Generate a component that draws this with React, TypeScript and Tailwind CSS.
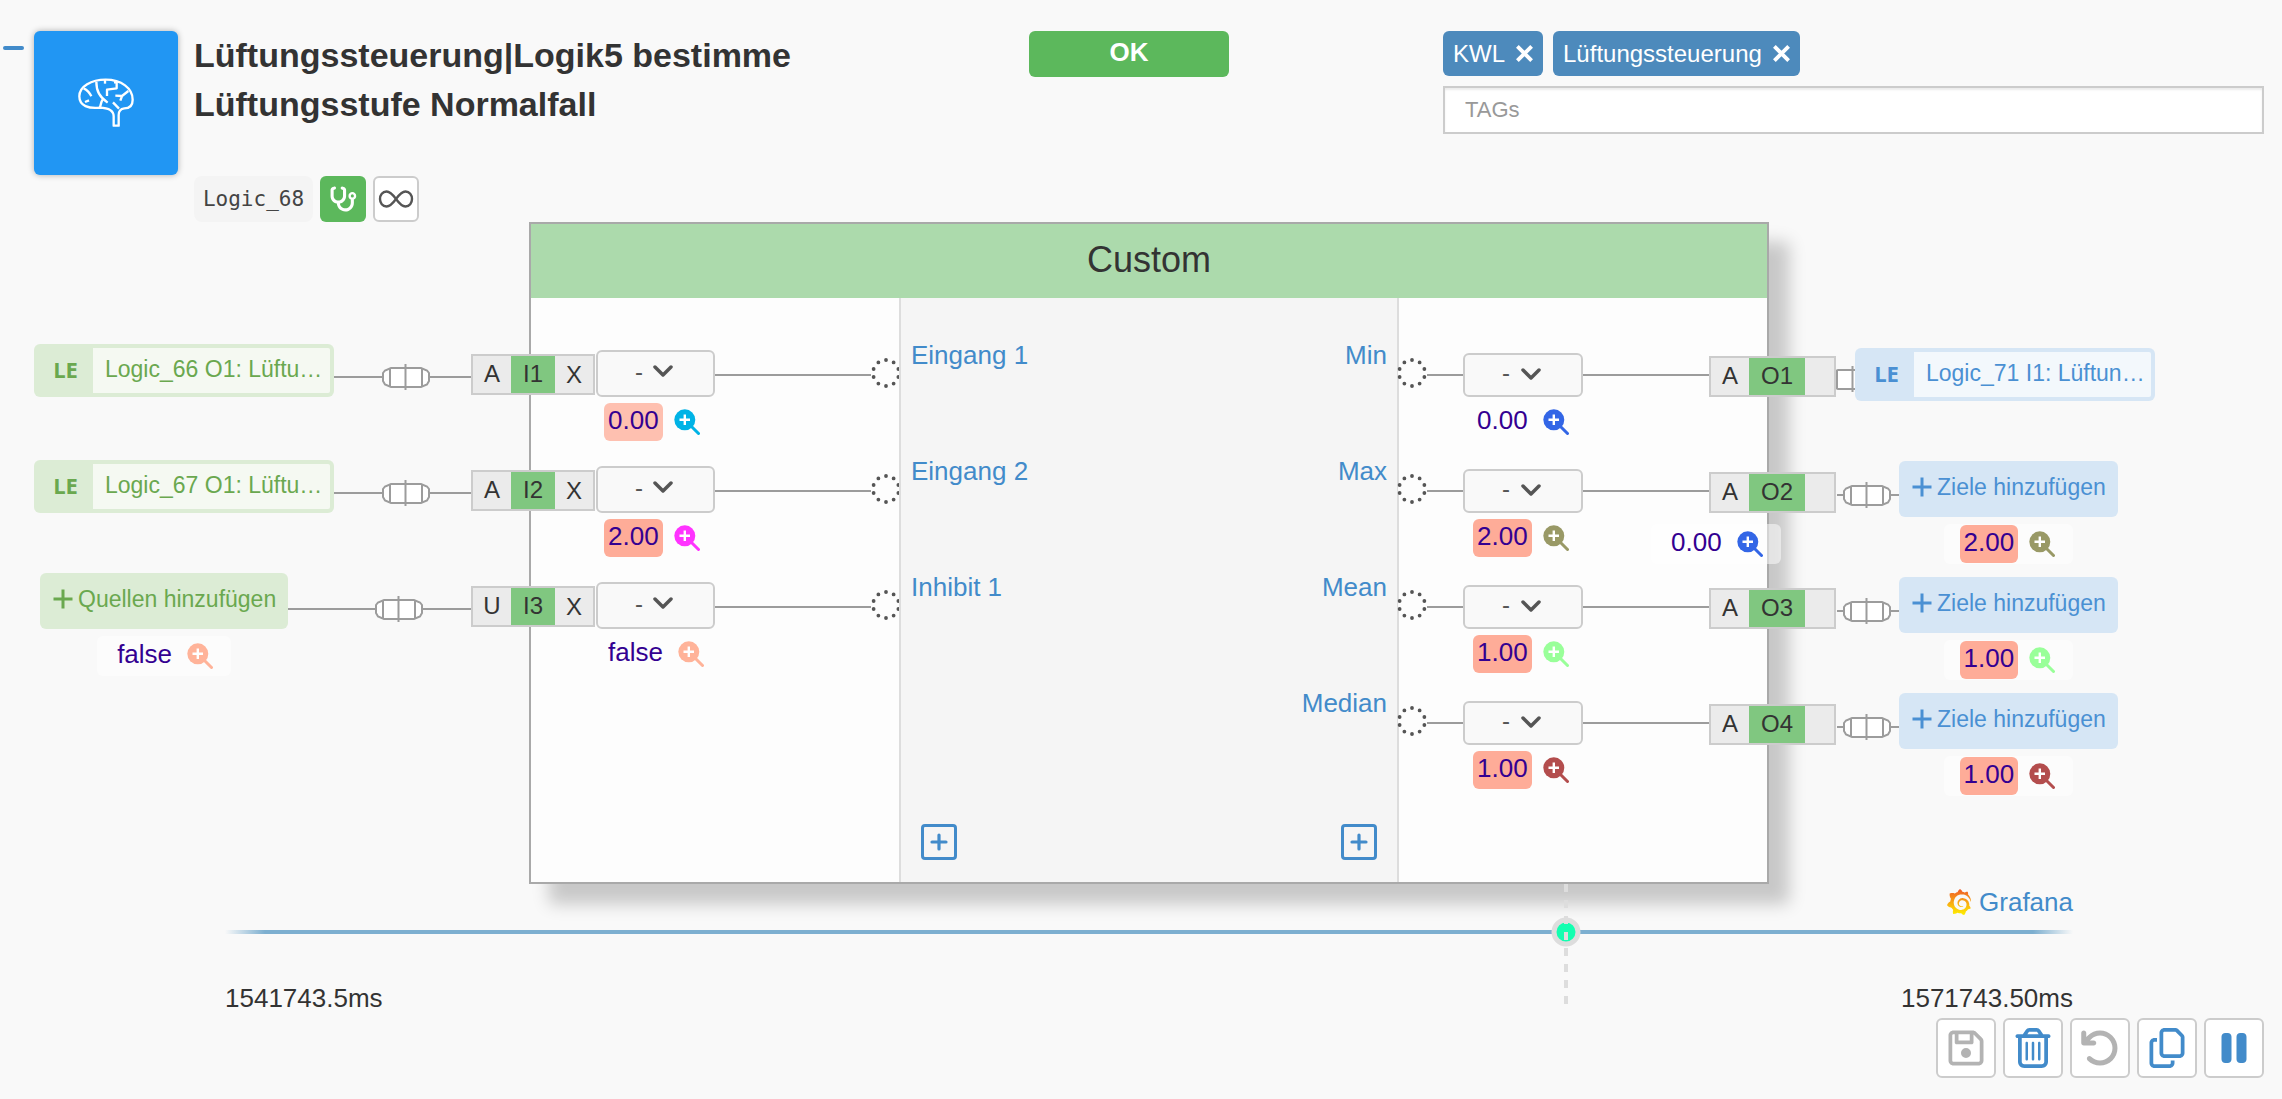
import React from 'react';
import {
  FaArrowRotateLeft,
  FaPause,
  FaRegCopy,
  FaRegFloppyDisk,
  FaRegTrashCan,
  FaStethoscope,
} from 'react-icons/fa6';
import { SiGrafana } from 'react-icons/si';

type Tone = 'green' | 'blue';

interface Reading {
  text: string;
  highlight?: string;
  lens: string;
}

interface Port {
  kind: string;
  name: string;
  label: string;
  value: Reading;
  link?: string;
  outer?: Reading;
}

const SALMON = 'bg-[#feac98]';

const inputs: Port[] = [
  {
    kind: 'A',
    name: 'I1',
    label: 'Eingang 1',
    value: { text: '0.00', highlight: 'bg-[#fec0b0]', lens: 'text-[#00b3e6]' },
    link: 'Logic_66 O1: Lüftu…',
  },
  {
    kind: 'A',
    name: 'I2',
    label: 'Eingang 2',
    value: { text: '2.00', highlight: SALMON, lens: 'text-[#ff33ff]' },
    link: 'Logic_67 O1: Lüftu…',
  },
  {
    kind: 'U',
    name: 'I3',
    label: 'Inhibit 1',
    value: { text: 'false', lens: 'text-[#ffb399]' },
    outer: { text: 'false', lens: 'text-[#ffb399]' },
  },
];

const outputs: Port[] = [
  {
    kind: 'A',
    name: 'O1',
    label: 'Min',
    value: { text: '0.00', lens: 'text-[#3366e6]' },
    link: 'Logic_71 I1: Lüftun…',
    outer: { text: '0.00', lens: 'text-[#3366e6]' },
  },
  {
    kind: 'A',
    name: 'O2',
    label: 'Max',
    value: { text: '2.00', highlight: SALMON, lens: 'text-[#999966]' },
    outer: { text: '2.00', highlight: SALMON, lens: 'text-[#999966]' },
  },
  {
    kind: 'A',
    name: 'O3',
    label: 'Mean',
    value: { text: '1.00', highlight: SALMON, lens: 'text-[#99ff99]' },
    outer: { text: '1.00', highlight: SALMON, lens: 'text-[#99ff99]' },
  },
  {
    kind: 'A',
    name: 'O4',
    label: 'Median',
    value: { text: '1.00', highlight: SALMON, lens: 'text-[#b34d4d]' },
    outer: { text: '1.00', highlight: SALMON, lens: 'text-[#b34d4d]' },
  },
];

function BrainIcon() {
  return (
    <svg
      className="h-[50px] w-14"
      viewBox="235 175 168 150"
      fill="none"
      stroke="white"
      strokeWidth="7"
      strokeLinejoin="round"
      aria-hidden="true"
    >
      <path d="M300 264C268 267 239 260 239 230C239 200 275 180 318 180C365 180 399 206 399 240C399 257 390 266 374 266C361 268 357 276 357 286V318H342V290C342 274 330 265 300 264Z" />
      <path d="M252 206C262 211 270 219 275 230" />
      <path d="M256 247L268 242" />
      <path d="M290 186C290 215 300 232 324 249" />
      <path d="M310 238C304 245 304 254 301 263" />
      <path d="M316 181V192" />
      <path d="M343 188H351V206L322 210V229" />
      <path d="M386 214L367 229L347 228M367 229L362 243" />
      <path d="M340 248L358 267" />
    </svg>
  );
}

function InfinityIcon() {
  return (
    <svg className="h-5 w-9" viewBox="0 0 36 20" fill="none" stroke="#555" strokeWidth="2.4" aria-hidden="true">
      <path d="M18 10C14 4.500 11.500 2.500 8.500 2.500C4.500 2.500 2 6 2 10S4.500 17.500 8.500 17.500C11.500 17.500 14 15.500 18 10C22 4.500 24.500 2.500 27.500 2.500C31.500 2.500 34 6 34 10S31.500 17.500 27.500 17.500C24.500 17.500 22 15.500 18 10Z" />
    </svg>
  );
}

function LensIcon({ tone }: { tone: string }) {
  return (
    <svg className={`size-[26px] ${tone}`} viewBox="0 0 26 26" aria-hidden="true">
      <path d="M16 16L24.500 24.500" stroke="currentColor" strokeWidth="3" strokeLinecap="round" />
      <circle cx="10.800" cy="10.800" r="10.500" fill="currentColor" />
      <path d="M10.800 5.500V16M5.500 10.800H16" stroke="white" strokeWidth="2.400" />
    </svg>
  );
}

function PlusIcon() {
  return (
    <svg className="size-5" viewBox="0 0 20 20" stroke="currentColor" strokeWidth="3" aria-hidden="true">
      <path d="M10 .5V19.500M.5 10H19.500" />
    </svg>
  );
}

function Plug() {
  return (
    <svg
      className="h-[26px] w-12 shrink-0"
      viewBox="0 0 48 26"
      fill="white"
      stroke="#9c9c9c"
      strokeWidth="2"
      aria-hidden="true"
    >
      <path d="M1 9L3 6.500L9 4H39L45 6.500L47 9V17L45 20.500L39 23H9L3 20.500L1 17Z" />
      <path d="M8 4V23M40 4V23M23.500 0V26" />
    </svg>
  );
}

function Wire({ className }: { className: string }) {
  return <span className={`h-0.5 bg-[#9c9c9c] ${className}`} />;
}

function ValueTag({ reading, pill = '' }: { reading: Reading; pill?: string }) {
  return (
    <div className={`flex items-center gap-[11px] text-[26px] leading-[34px] text-[#330091] ${pill}`}>
      <span className={`h-[38px] rounded-md px-1 ${reading.highlight ?? ''}`}>{reading.text}</span>
      <button type="button" aria-label={`Verlauf ${reading.text}`}>
        <LensIcon tone={reading.lens} />
      </button>
    </div>
  );
}

function FilterSelect({ name, size }: { name: string; size: string }) {
  return (
    <div className="relative">
      <select
        aria-label={`Filter ${name}`}
        className={`block appearance-none rounded-md border-2 border-[#ccc] bg-[#f9f9f9] pb-1 pl-[37px] text-2xl text-[#555] ${size}`}
      >
        <option>-</option>
      </select>
      <svg
        className="pointer-events-none absolute top-[15px] right-[42px] h-3 w-5"
        viewBox="0 0 20 12"
        fill="none"
        stroke="#555"
        strokeWidth="3.500"
        strokeLinecap="round"
        strokeLinejoin="round"
        aria-hidden="true"
      >
        <path d="M2 2L10 10L18 2" />
      </svg>
    </div>
  );
}

function Anchor({ className }: { className: string }) {
  return (
    <svg className={`size-[30px] shrink-0 ${className}`} viewBox="0 0 30 30" aria-hidden="true">
      <circle cx="15" cy="15" r="14" fill="#fdfdfd" />
      <circle
        cx="15"
        cy="15"
        r="13"
        fill="none"
        stroke="#555"
        strokeWidth="3.800"
        strokeLinecap="round"
        strokeDasharray="0 10"
        pathLength="100"
        transform="rotate(-90 15 15)"
      />
    </svg>
  );
}

function PortBox({ port, output = false }: { port: Port; output?: boolean }) {
  return (
    <div className="relative z-10 flex h-[41px] shrink-0 border-2 border-[#ccc] bg-[#ebebeb] text-2xl leading-9 text-[#333]">
      <span className="w-[38px] text-center">{port.kind}</span>
      <span className={`bg-[#80c780] text-center ${output ? 'w-14' : 'w-11'}`}>{port.name}</span>
      {output ? (
        <span className="w-[29px]" />
      ) : (
        <button type="button" className="w-[38px]" aria-label={`${port.name} trennen`}>
          X
        </button>
      )}
    </div>
  );
}

function LinkedBlock({ text, tone }: { text: string; tone: Tone }) {
  const green = tone === 'green';
  return (
    <a
      href="#"
      className={`z-10 flex h-[53px] w-[300px] shrink-0 rounded-md p-1 ${
        green ? 'bg-[#dcecd5] text-[#6aa84f]' : 'bg-[#d6e6f5] text-[#4a90d3]'
      }`}
    >
      <span className="w-[55px] text-center font-['Open_Sans',sans-serif] text-[22px] leading-[42px] font-bold">LE</span>
      <span
        className={`flex-1 rounded-r-xs pl-3 text-[23px] leading-[42px] whitespace-nowrap ${
          green ? 'bg-[#f5f9f2]' : 'bg-[#f3f8fc]'
        }`}
      >
        {text}
      </span>
    </a>
  );
}

function AddButton({ text, tone }: { text: string; tone: Tone }) {
  return (
    <button
      type="button"
      className={`flex h-14 items-center gap-[5px] rounded-md pr-3 pb-1 pl-[13px] text-[23px] whitespace-nowrap ${
        tone === 'green' ? 'bg-[#dcecd5] text-[#6aa84f]' : 'bg-[#d6e6f5] text-[#4a90d3]'
      }`}
    >
      <PlusIcon />
      {text}
    </button>
  );
}

const outerPill = 'mt-[7px] h-10 rounded-md bg-white/50 pr-[18px] pl-4 shrink-0';

function SourceRow({ port }: { port: Port }) {
  return (
    <li className="flex h-29 items-start pr-[58px]">
      {port.link ? (
        <div className="mt-[9px] ml-[34px]">
          <LinkedBlock text={port.link} tone="green" />
        </div>
      ) : (
        <div className="mt-1.5 ml-10 flex flex-col items-center">
          <AddButton text="Quellen hinzufügen" tone="green" />
          {port.outer && <ValueTag reading={port.outer} pill={outerPill} />}
        </div>
      )}
      <Wire className="mt-[41px] flex-1" />
      <div className="mt-[29px]">
        <Plug />
      </div>
      <Wire className={`mt-[41px] ${port.link ? 'w-[41px]' : 'w-12'}`} />
    </li>
  );
}

function TargetRow({ port }: { port: Port }) {
  if (port.link) {
    return (
      <li className="relative flex h-29 items-start pl-[60px]">
        <div className="mt-[31px] -mr-[22px]">
          <Plug />
        </div>
        <div className="relative mt-[13px]">
          <LinkedBlock text={port.link} tone="blue" />
        </div>
        {port.outer && (
          <div className="absolute top-[182px] -left-[118px] z-20">
            <ValueTag reading={port.outer} pill={outerPill} />
          </div>
        )}
      </li>
    );
  }
  return (
    <li className="flex h-29 items-start pl-[68px]">
      <Wire className="mt-[43px] w-1.5" />
      <div className="mt-[31px]">
        <Plug />
      </div>
      <Wire className="mt-[43px] w-2" />
      <div className="mt-2.5 flex flex-col items-center">
        <AddButton text="Ziele hinzufügen" tone="blue" />
        {port.outer && <ValueTag reading={port.outer} pill={outerPill} />}
      </div>
    </li>
  );
}

function InputRow({ port }: { port: Port }) {
  return (
    <li className="-mr-0.5 -ml-[60px] flex h-29 items-start">
      <div className="mt-[19px] mr-px">
        <PortBox port={port} />
      </div>
      <div className="mt-[15px]">
        <FilterSelect name={port.name} size="h-[47px] w-[119px]" />
        <div className="mt-1.5 pl-2">
          <ValueTag reading={port.value} />
        </div>
      </div>
      <Wire className="mt-[39px] flex-1" />
      <Anchor className="mt-[23px]" />
    </li>
  );
}

function OutputRow({ port }: { port: Port }) {
  return (
    <li className="-mr-[69px] -ml-0.5 flex h-29 items-start">
      <Anchor className="mt-[23px]" />
      <Wire className="mt-[39px] w-9" />
      <div className="mt-[18px]">
        <FilterSelect name={port.name} size="h-11 w-[120px]" />
        <div className="mt-1.5 pl-2.5">
          <ValueTag reading={port.value} />
        </div>
      </div>
      <Wire className="mt-[39px] flex-1" />
      <div className="mt-[21px]">
        <PortBox port={port} output />
      </div>
    </li>
  );
}

function AddPort({ label }: { label: string }) {
  return (
    <button
      type="button"
      aria-label={label}
      className="flex size-9 items-center justify-center rounded-sm border-3 border-[#428bca] text-[#428bca]"
    >
      <svg className="size-[18px]" viewBox="0 0 18 18" stroke="currentColor" strokeWidth="3.200" strokeLinecap="round">
        <path d="M9 2V16M2 9H16" />
      </svg>
    </button>
  );
}

function Tag({ text }: { text: string }) {
  return (
    <span className="flex h-[45px] items-center gap-[11px] rounded-md bg-[#4d8abc] px-2.5 text-2xl text-white">
      {text}
      <button type="button" aria-label={`${text} entfernen`}>
        <svg className="size-[17px]" viewBox="0 0 16 16" stroke="currentColor" strokeWidth="3.600">
          <path d="M1.300 1.300L14.700 14.700M14.700 1.300L1.300 14.700" />
        </svg>
      </button>
    </span>
  );
}

function ToolButton({ label, disabled = false, children }: { label: string; disabled?: boolean; children: React.ReactNode }) {
  return (
    <button
      type="button"
      aria-label={label}
      disabled={disabled}
      className={`flex size-15 items-center justify-center rounded-md border-2 border-[#ccc] bg-white text-[40px] ${
        disabled ? 'text-[#b3b3b3]' : 'text-[#428bca]'
      }`}
    >
      {children}
    </button>
  );
}

function Header() {
  return (
    <header className="grid min-h-[222px] grid-cols-[1029fr_414fr_839fr] pt-[31px]">
      <div className="flex items-start">
        <button type="button" aria-label="Einklappen" className="mt-[15px] mr-2.5 ml-[3px] h-1 w-[21px] rounded-full bg-[#428bca]" />
        <div className="flex size-36 shrink-0 items-center justify-center rounded-md bg-[#2196f3] shadow-[0_0_6px_rgba(0,0,0,0.3)]">
          <BrainIcon />
        </div>
        <div className="ml-4 flex h-[191px] flex-col justify-between">
          <h1 className="max-w-[640px] text-[34px] leading-[49px] font-bold text-[#333]">
            Lüftungssteuerung|Logik5 bestimme Lüftungsstufe Normalfall
          </h1>
          <div className="flex h-[46px] gap-[7px]">
            <code className="w-[119px] rounded-lg bg-[#f4f4f4] text-center font-['DejaVu_Sans_Mono',monospace] text-[21px] leading-[46px] text-[#444]">
              Logic_68
            </code>
            <button type="button" aria-label="Diagnose" className="flex w-[46px] items-center justify-center rounded-md bg-[#5cb85c] text-[28px] text-white">
              <FaStethoscope />
            </button>
            <button type="button" aria-label="Dauerbetrieb" className="flex w-[46px] items-center justify-center rounded-md border-2 border-[#ccc] bg-white">
              <InfinityIcon />
            </button>
          </div>
        </div>
      </div>
      <div>
        <button type="button" className="h-[46px] w-50 rounded-md bg-[#5cb85c] pb-1 text-[26px] leading-9 font-bold text-white">
          OK
        </button>
      </div>
      <div className="pr-[18px]">
        <div className="flex gap-2.5">
          <Tag text="KWL" />
          <Tag text="Lüftungssteuerung" />
        </div>
        <input
          type="text"
          aria-label="TAGs"
          placeholder="TAGs"
          className="mt-2.5 block h-12 w-full border-2 border-[#ccc] bg-white px-5 text-[22px] shadow-[inset_0_2px_2px_rgba(0,0,0,0.08)] placeholder:text-[#999]"
        />
      </div>
    </header>
  );
}

function Timeline() {
  return (
    <section className="pr-[209px] pl-[225px] text-[26px] leading-9 text-[#333]">
      <div className="flex justify-end">
        <a href="#" className="flex items-center gap-[7px] text-[#428bca]">
          <svg width="0" height="0" aria-hidden="true">
            <defs>
              <linearGradient id="grafana" x1="0" y1="1" x2="0" y2="0">
                <stop offset="0" stopColor="#fff100" />
                <stop offset="1" stopColor="#f05a28" />
              </linearGradient>
            </defs>
          </svg>
          <SiGrafana className="size-[26px]" fill="url(#grafana)" />
          Grafana
        </a>
      </div>
      <div className="relative mt-2.5 h-1 bg-[linear-gradient(to_right,transparent,#7dafd0_40px,#7dafd0_calc(100%_-_40px),transparent)]">
        <span className="absolute top-1/2 left-[72.56%] size-[29px] -translate-1/2 rounded-full border-5 border-[#ddd] bg-[#12ffb0]" />
        <span className="absolute -top-[46px] left-[72.56%] h-30 w-1 -translate-x-1/2 bg-[repeating-linear-gradient(to_bottom,#dddddd_0_8px,transparent_8px_16px)]" />
      </div>
      <div className="mt-[46px] mb-0.5 flex justify-between">
        <span>1541743.5ms</span>
        <span>1571743.50ms</span>
      </div>
    </section>
  );
}

export default function App() {
  return (
    <div className="min-h-screen overflow-x-hidden bg-[#f9f9f9] font-['Liberation_Sans',Arial,sans-serif] text-[#333]">
      <Header />
      <main className="grid grid-cols-[529fr_1240fr_513fr]">
        <ul className="pt-[113px]">
          {inputs.map((port) => (
            <SourceRow key={port.name} port={port} />
          ))}
        </ul>
        <section className="border-2 border-[#a9a9a9] bg-[#fdfdfd] shadow-[20px_20px_16px_rgba(0,0,0,0.2)]">
          <h2 className="bg-[#acdaac] pb-0.5 text-center text-4xl leading-[72px]">Custom</h2>
          <div className="grid grid-cols-[368fr_500fr_368fr]">
            <ul className="pt-[37px]">
              {inputs.map((port) => (
                <InputRow key={port.name} port={port} />
              ))}
            </ul>
            <div className="flex flex-col border-x-2 border-[#ddd] bg-[#f5f5f5] pt-[37px] pb-5.5">
              <div className="flex justify-between px-2.5 text-[26px] leading-10 text-[#428bca]">
                <ul>
                  {inputs.map((port) => (
                    <li key={port.name} className="h-29">
                      {port.label}
                    </li>
                  ))}
                </ul>
                <ul className="text-right">
                  {outputs.map((port) => (
                    <li key={port.name} className="h-29">
                      {port.label}
                    </li>
                  ))}
                </ul>
              </div>
              <div className="mt-[25px] flex justify-between px-5">
                <AddPort label="Eingang hinzufügen" />
                <AddPort label="Ausgang hinzufügen" />
              </div>
            </div>
            <ul className="pt-[37px]">
              {outputs.map((port) => (
                <OutputRow key={port.name} port={port} />
              ))}
            </ul>
          </div>
        </section>
        <ul className="pt-[113px]">
          {outputs.map((port) => (
            <TargetRow key={port.name} port={port} />
          ))}
        </ul>
      </main>
      <Timeline />
      <footer className="flex justify-end gap-[7px] pr-[18px] pb-5">
        <ToolButton label="Speichern" disabled>
          <FaRegFloppyDisk />
        </ToolButton>
        <ToolButton label="Löschen">
          <FaRegTrashCan />
        </ToolButton>
        <ToolButton label="Rückgängig" disabled>
          <FaArrowRotateLeft />
        </ToolButton>
        <ToolButton label="Kopieren">
          <FaRegCopy />
        </ToolButton>
        <ToolButton label="Pause">
          <FaPause />
        </ToolButton>
      </footer>
    </div>
  );
}
